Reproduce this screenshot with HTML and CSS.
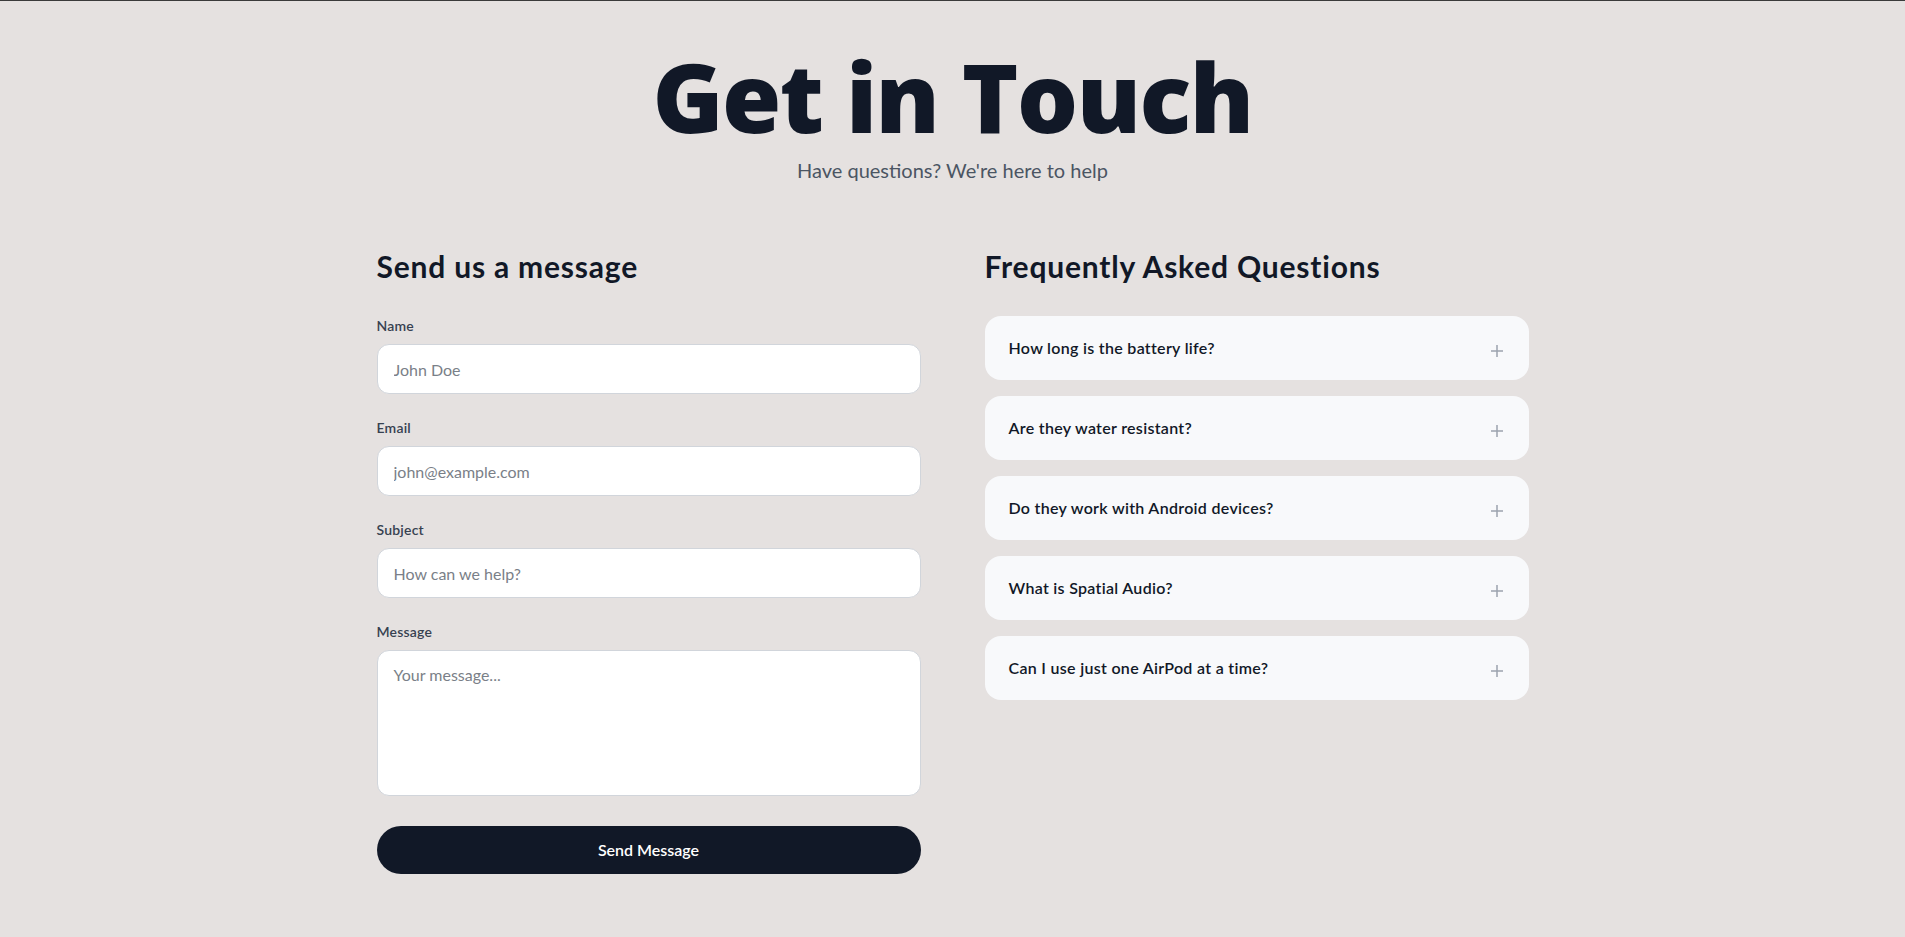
FILE: index.html
```html
<!DOCTYPE html>
<html lang="en">
<head>
<meta charset="utf-8">
<title>Get in Touch</title>
<link rel="stylesheet" href="styles.css">
</head>
<body>
<div class="page">
  <header class="hero">
    <h1 class="hero-title">Get in Touch</h1>
    <p class="hero-sub">Have questions? We're here to help</p>
  </header>
  <main class="grid">
    <section class="col">
      <h2 class="section-title">Send us a message</h2>
      <form class="form">
        <div class="field">
          <label class="label">Name</label>
          <input class="input" type="text" placeholder="John Doe">
        </div>
        <div class="field">
          <label class="label">Email</label>
          <input class="input" type="email" placeholder="john@example.com">
        </div>
        <div class="field">
          <label class="label">Subject</label>
          <input class="input" type="text" placeholder="How can we help?">
        </div>
        <div class="field">
          <label class="label">Message</label>
          <textarea class="input textarea" rows="5" placeholder="Your message..."></textarea>
        </div>
        <button class="btn" type="button">Send Message</button>
      </form>
    </section>
    <section class="col">
      <h2 class="section-title">Frequently Asked Questions</h2>
      <div class="faq">
        <div class="faq-item"><span class="faq-q">How long is the battery life?</span><svg class="plus" viewBox="0 0 16 16" width="16" height="16"><path d="M2 8h12M8 2v12" stroke="currentColor" stroke-width="1.5" fill="none"/></svg></div>
        <div class="faq-item"><span class="faq-q">Are they water resistant?</span><svg class="plus" viewBox="0 0 16 16" width="16" height="16"><path d="M2 8h12M8 2v12" stroke="currentColor" stroke-width="1.5" fill="none"/></svg></div>
        <div class="faq-item"><span class="faq-q">Do they work with Android devices?</span><svg class="plus" viewBox="0 0 16 16" width="16" height="16"><path d="M2 8h12M8 2v12" stroke="currentColor" stroke-width="1.5" fill="none"/></svg></div>
        <div class="faq-item"><span class="faq-q">What is Spatial Audio?</span><svg class="plus" viewBox="0 0 16 16" width="16" height="16"><path d="M2 8h12M8 2v12" stroke="currentColor" stroke-width="1.5" fill="none"/></svg></div>
        <div class="faq-item"><span class="faq-q">Can I use just one AirPod at a time?</span><svg class="plus" viewBox="0 0 16 16" width="16" height="16"><path d="M2 8h12M8 2v12" stroke="currentColor" stroke-width="1.5" fill="none"/></svg></div>
      </div>
    </section>
  </main>
</div>
</body>
</html>
```

FILE: styles.css
```css
* { box-sizing: border-box; }
html, body { margin: 0; padding: 0; }
body {
  background: #e5e1e0;
  font-family: "Lato", "Noto Sans", sans-serif;
  color: #111827;
  min-height: 937px;
}
.page {
  border-top: 1px solid #3a3a3a;
  padding-top: 47px;
  padding-bottom: 48px;
}
.hero { text-align: center; }
.hero-title {
  margin: 0;
  font-family: "Open Sans", "Lato", sans-serif;
  font-size: 96px;
  line-height: 1;
  font-weight: 800;
  letter-spacing: -1.5px;
  color: #111827;
}
.hero-sub {
  margin: 12px 0 0;
  font-size: 20px;
  line-height: 28px;
  color: #4b5563;
}
.grid {
  width: 1152px;
  margin: 64px auto 0;
  display: grid;
  grid-template-columns: 1fr 1fr;
  column-gap: 64px;
}
.section-title {
  margin: 0 0 32px;
  font-size: 30px;
  line-height: 36px;
  font-weight: 700;
  letter-spacing: 0.8px;
  color: #111827;
}
.form { display: flex; flex-direction: column; gap: 24px; }
.field { display: flex; flex-direction: column; }
.label {
  font-size: 14px;
  line-height: 20px;
  font-weight: 600;
  letter-spacing: 0.2px;
  color: #374151;
  margin-bottom: 8px;
}
.input {
  width: 100%;
  height: 50px;
  padding: 12px 16px;
  font-family: inherit;
  font-size: 16px;
  line-height: 24px;
  color: #111827;
  background: #ffffff;
  border: 1px solid #d1d5db;
  border-radius: 12px;
  outline: none;
}
.input::placeholder { color: #7a7f88; }
.textarea { height: 146px; resize: none; display: block; }
.btn {
  margin-top: 6px;
  height: 48px;
  border: none;
  border-radius: 9999px;
  background: #111827;
  color: #ffffff;
  font-family: inherit;
  font-size: 16px;
  line-height: 24px;
  font-weight: 600;
}
.faq { display: flex; flex-direction: column; gap: 16px; }
.faq-item {
  height: 64px;
  padding: 20px 24px;
  background: #f8f9fb;
  border-radius: 16px;
  display: flex;
  align-items: center;
  justify-content: space-between;
}
.faq-q {
  font-size: 16px;
  line-height: 24px;
  font-weight: 600;
  letter-spacing: 0.3px;
  color: #111827;
}
.plus { color: #9ca3af; margin-top: 6px; flex: none; }
```
